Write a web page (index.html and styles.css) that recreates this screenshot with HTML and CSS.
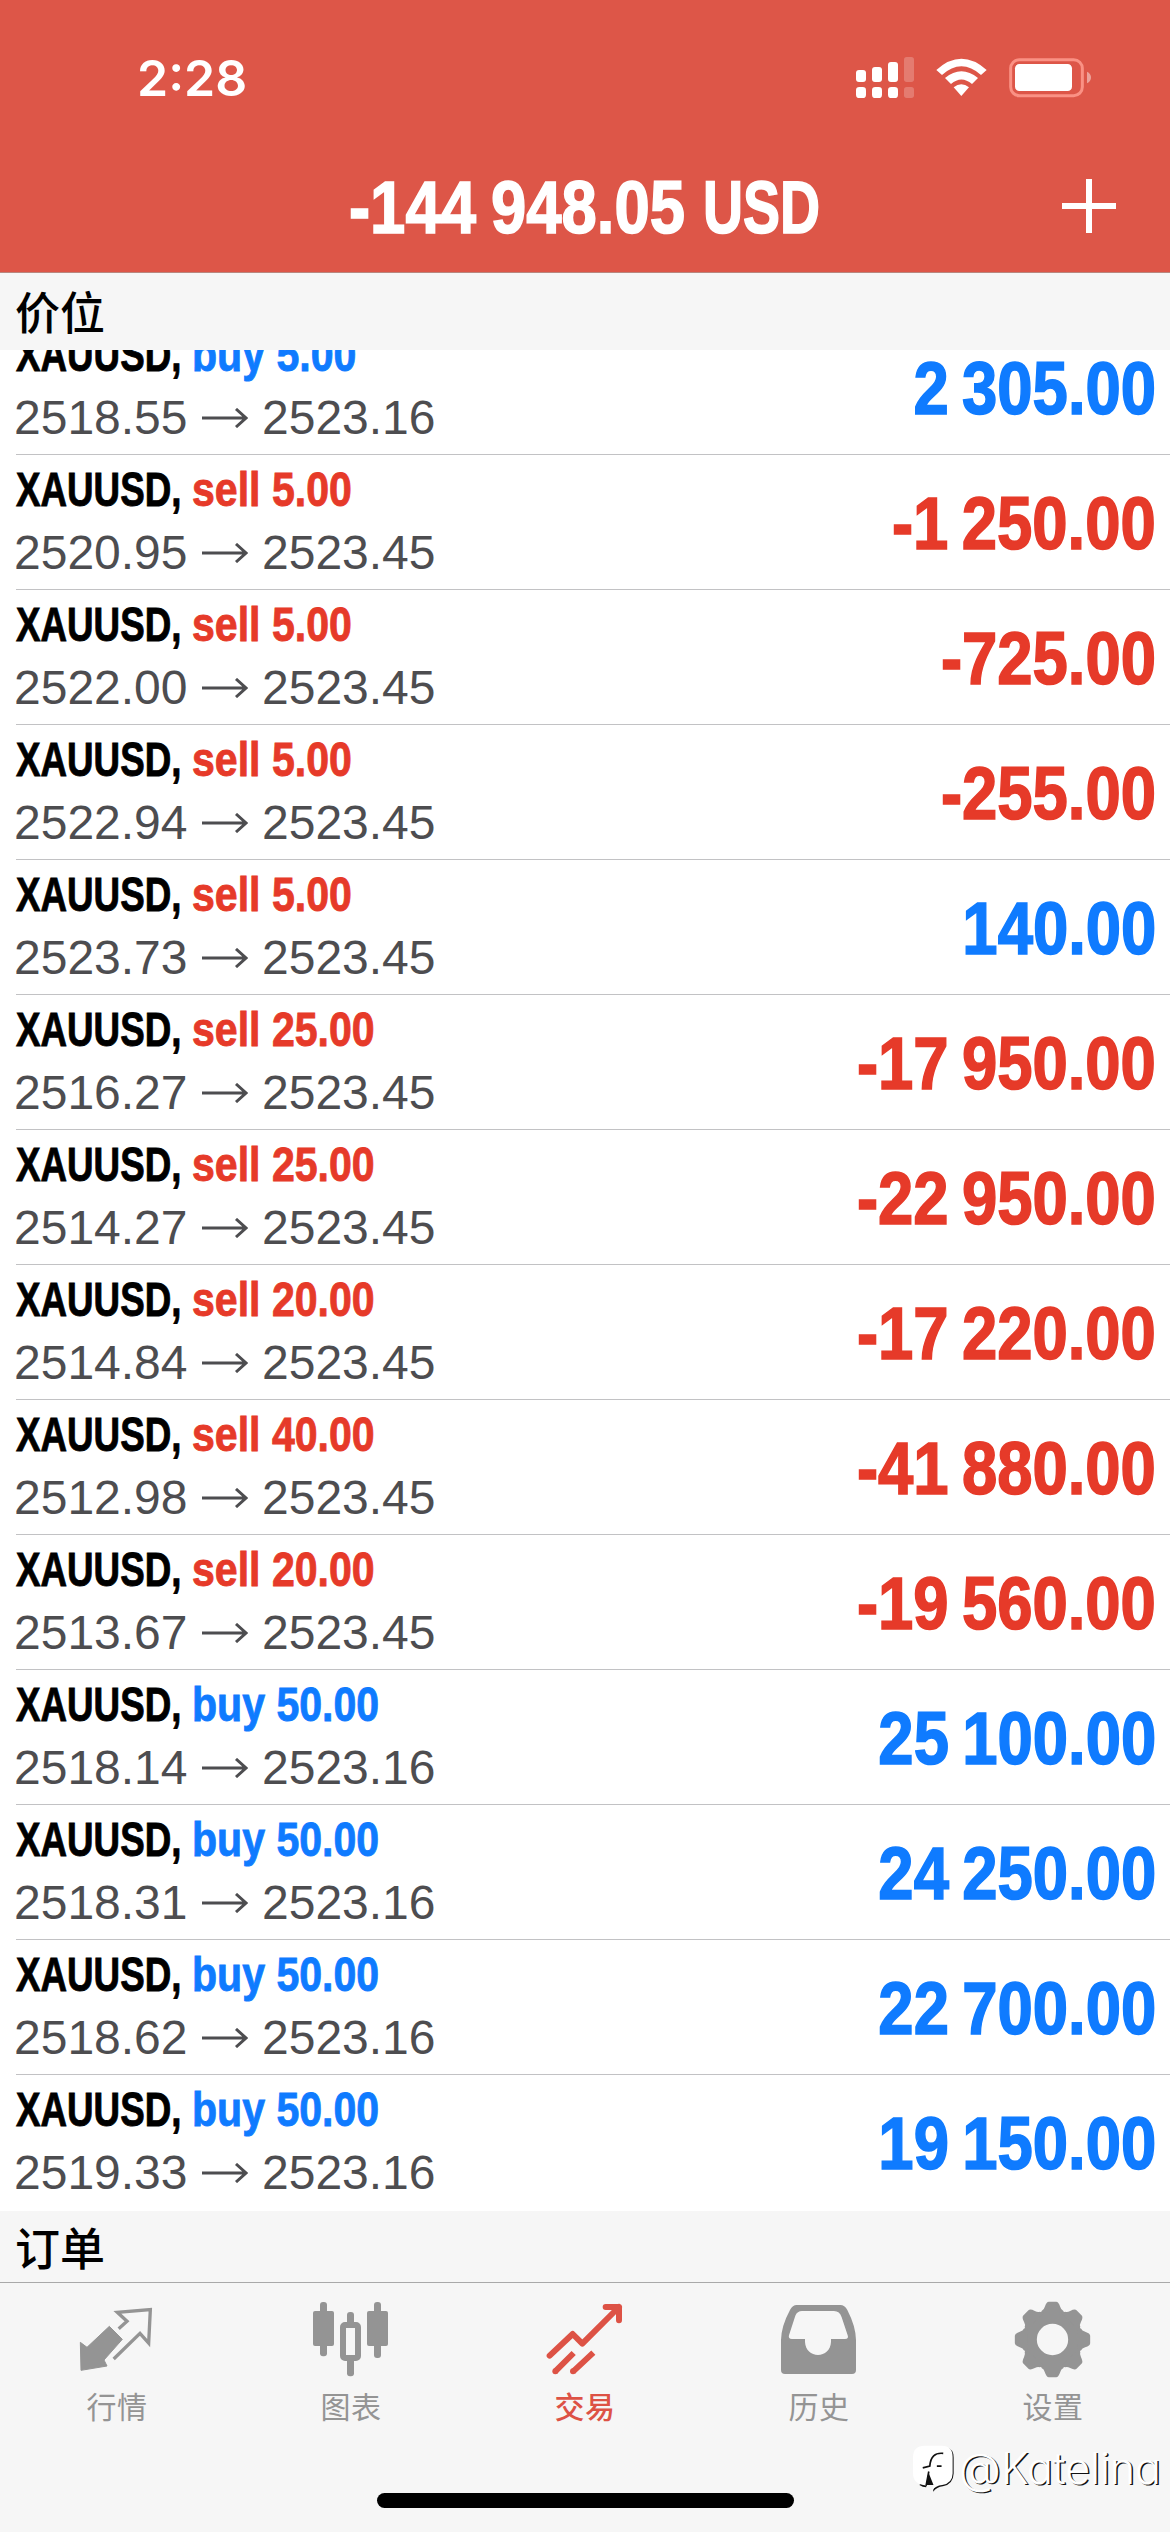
FILE: index.html
```html
<!DOCTYPE html>
<html lang="zh-CN">
<head>
<meta charset="utf-8">
<title>交易</title>
<link rel="stylesheet" href="styles.css">
</head>
<body>
<div class="screen">
  <header class="top">
    <div class="status">
      <span class="clock">2:28</span>
      <svg class="status-icons" viewBox="0 0 780 180" aria-hidden="true">
        <g fill="#fff">
          <rect x="48" y="60" width="30" height="36" rx="9"/>
          <rect x="96" y="51" width="30" height="45" rx="9"/>
          <rect x="144" y="36" width="30" height="60" rx="9"/>
          <rect x="48" y="111" width="30" height="33" rx="10"/>
          <rect x="96" y="111" width="30" height="33" rx="10"/>
          <rect x="144" y="111" width="30" height="33" rx="10"/>
          <rect x="192" y="21" width="30" height="75" rx="8" opacity=".22"/>
          <rect x="192" y="111" width="30" height="33" rx="8" opacity=".22"/>
          <path d="M289 60 Q364 -7 440 60 L423 75 Q364 23 306 75 Z"/>
          <path d="M315 84 Q364 44 414 84 L396 102 Q364 75 333 102 Z"/>
          <path d="M341 112 Q364 94 387 112 L364 138 Z"/>
          <rect x="525" y="42" width="171" height="81" rx="13"/>
          <path d="M741 65 Q753 71 753 82 Q753 94 741 100 Z" opacity=".45"/>
        </g>
        <rect x="512" y="29" width="215" height="108" rx="26" fill="none" stroke="#fa9184" stroke-width="9"/>
      </svg>
    </div>
    <div class="titlebar">
      <h1 class="balance"><span class="balance-num">-144 948.05</span><span class="balance-cur">USD</span></h1>
      <svg class="add" viewBox="0 0 54 54" aria-label="新订单"><path d="M0 27H54M27 0V54" stroke="#fff" stroke-width="6"/></svg>
    </div>
  </header>

  <h2 class="section section-first">价位</h2>
  <ul class="list">
    <li class="row"><div class="info"><div class="deal"><span class="sym">XAUUSD,</span><span class="side buy">buy 5.00</span></div><div class="prices"><span class="from">2518.55</span><svg class="arrow" viewBox="0 0 46 20"><path d="M0 10H44M34 1L44 10L34 19"/></svg><span>2523.16</span></div></div><span class="profit buy">2 305.00</span></li>
    <li class="row"><div class="info"><div class="deal"><span class="sym">XAUUSD,</span><span class="side sell">sell 5.00</span></div><div class="prices"><span class="from">2520.95</span><svg class="arrow" viewBox="0 0 46 20"><path d="M0 10H44M34 1L44 10L34 19"/></svg><span>2523.45</span></div></div><span class="profit sell">-1 250.00</span></li>
    <li class="row"><div class="info"><div class="deal"><span class="sym">XAUUSD,</span><span class="side sell">sell 5.00</span></div><div class="prices"><span class="from">2522.00</span><svg class="arrow" viewBox="0 0 46 20"><path d="M0 10H44M34 1L44 10L34 19"/></svg><span>2523.45</span></div></div><span class="profit sell">-725.00</span></li>
    <li class="row"><div class="info"><div class="deal"><span class="sym">XAUUSD,</span><span class="side sell">sell 5.00</span></div><div class="prices"><span class="from">2522.94</span><svg class="arrow" viewBox="0 0 46 20"><path d="M0 10H44M34 1L44 10L34 19"/></svg><span>2523.45</span></div></div><span class="profit sell">-255.00</span></li>
    <li class="row"><div class="info"><div class="deal"><span class="sym">XAUUSD,</span><span class="side sell">sell 5.00</span></div><div class="prices"><span class="from">2523.73</span><svg class="arrow" viewBox="0 0 46 20"><path d="M0 10H44M34 1L44 10L34 19"/></svg><span>2523.45</span></div></div><span class="profit buy">140.00</span></li>
    <li class="row"><div class="info"><div class="deal"><span class="sym">XAUUSD,</span><span class="side sell">sell 25.00</span></div><div class="prices"><span class="from">2516.27</span><svg class="arrow" viewBox="0 0 46 20"><path d="M0 10H44M34 1L44 10L34 19"/></svg><span>2523.45</span></div></div><span class="profit sell">-17 950.00</span></li>
    <li class="row"><div class="info"><div class="deal"><span class="sym">XAUUSD,</span><span class="side sell">sell 25.00</span></div><div class="prices"><span class="from">2514.27</span><svg class="arrow" viewBox="0 0 46 20"><path d="M0 10H44M34 1L44 10L34 19"/></svg><span>2523.45</span></div></div><span class="profit sell">-22 950.00</span></li>
    <li class="row"><div class="info"><div class="deal"><span class="sym">XAUUSD,</span><span class="side sell">sell 20.00</span></div><div class="prices"><span class="from">2514.84</span><svg class="arrow" viewBox="0 0 46 20"><path d="M0 10H44M34 1L44 10L34 19"/></svg><span>2523.45</span></div></div><span class="profit sell">-17 220.00</span></li>
    <li class="row"><div class="info"><div class="deal"><span class="sym">XAUUSD,</span><span class="side sell">sell 40.00</span></div><div class="prices"><span class="from">2512.98</span><svg class="arrow" viewBox="0 0 46 20"><path d="M0 10H44M34 1L44 10L34 19"/></svg><span>2523.45</span></div></div><span class="profit sell">-41 880.00</span></li>
    <li class="row"><div class="info"><div class="deal"><span class="sym">XAUUSD,</span><span class="side sell">sell 20.00</span></div><div class="prices"><span class="from">2513.67</span><svg class="arrow" viewBox="0 0 46 20"><path d="M0 10H44M34 1L44 10L34 19"/></svg><span>2523.45</span></div></div><span class="profit sell">-19 560.00</span></li>
    <li class="row"><div class="info"><div class="deal"><span class="sym">XAUUSD,</span><span class="side buy">buy 50.00</span></div><div class="prices"><span class="from">2518.14</span><svg class="arrow" viewBox="0 0 46 20"><path d="M0 10H44M34 1L44 10L34 19"/></svg><span>2523.16</span></div></div><span class="profit buy">25 100.00</span></li>
    <li class="row"><div class="info"><div class="deal"><span class="sym">XAUUSD,</span><span class="side buy">buy 50.00</span></div><div class="prices"><span class="from">2518.31</span><svg class="arrow" viewBox="0 0 46 20"><path d="M0 10H44M34 1L44 10L34 19"/></svg><span>2523.16</span></div></div><span class="profit buy">24 250.00</span></li>
    <li class="row"><div class="info"><div class="deal"><span class="sym">XAUUSD,</span><span class="side buy">buy 50.00</span></div><div class="prices"><span class="from">2518.62</span><svg class="arrow" viewBox="0 0 46 20"><path d="M0 10H44M34 1L44 10L34 19"/></svg><span>2523.16</span></div></div><span class="profit buy">22 700.00</span></li>
    <li class="row"><div class="info"><div class="deal"><span class="sym">XAUUSD,</span><span class="side buy">buy 50.00</span></div><div class="prices"><span class="from">2519.33</span><svg class="arrow" viewBox="0 0 46 20"><path d="M0 10H44M34 1L44 10L34 19"/></svg><span>2523.16</span></div></div><span class="profit buy">19 150.00</span></li>
  </ul>
  <h2 class="section section-orders">订单</h2>

  <nav class="tabs">
    <a class="tab">
      <svg class="tab-icon" viewBox="234 120 234 234" aria-hidden="true">
        <path d="M241 247L261 262L328 199L367 238L312 300L321 318L243 331Z" fill="currentColor" stroke="currentColor" stroke-width="3" stroke-linejoin="round"/>
        <path d="M356 206L381 184L352 157L451 149L446 249L420 220L341 297" fill="none" stroke="currentColor" stroke-width="10"/>
      </svg>
      <span>行情</span>
    </a>
    <a class="tab">
      <svg class="tab-icon" viewBox="936 120 234 234" aria-hidden="true">
        <g fill="currentColor">
          <rect x="960" y="126" width="21" height="163" rx="9"/><rect x="939" y="153" width="63" height="105" rx="6"/>
          <rect x="1122" y="126" width="21" height="168" rx="9"/><rect x="1101" y="153" width="63" height="105" rx="6"/>
          <rect x="1041" y="156" width="21" height="45" rx="9"/><rect x="1041" y="290" width="21" height="59" rx="9"/>
        </g>
        <rect x="1029" y="195" width="45" height="99" rx="6" fill="none" stroke="currentColor" stroke-width="18"/>
      </svg>
      <span>图表</span>
    </a>
    <a class="tab active">
      <svg class="tab-icon" viewBox="288 120 234 234" aria-hidden="true">
        <g fill="none" stroke="currentColor" stroke-width="18" stroke-linecap="round" stroke-linejoin="round">
          <path d="M299 287L368 222L397 251L507 141M467 141H507V181"/>
        </g>
        <g fill="none" stroke="currentColor" stroke-width="18">
          <path d="M315 335L371 279M369 335L430 278"/>
        </g>
        <g fill="currentColor"><circle cx="316" cy="334" r="9"/><circle cx="369" cy="334" r="9"/><path d="M480 141H507V168Z"/></g>
      </svg>
      <span>交易</span>
    </a>
    <a class="tab">
      <svg class="tab-icon" viewBox="990 120 234 234" aria-hidden="true">
        <path fill="currentColor" fill-rule="evenodd" d="M1040 135H1171Q1184 135 1192 150Q1217 198 1218 240V330Q1218 342 1206 342H1005Q993 342 993 330V240Q994 198 1020 150Q1028 135 1040 135ZM1056 153Q1042 153 1036 167L1017 226Q1014 237 1026 237H1065V246C1066 270 1084 285 1104 285C1124 285 1142 270 1143 246V237H1185Q1197 237 1193 226L1175 172Q1169 153 1152 153Z"/>
      </svg>
      <span>历史</span>
    </a>
    <a class="tab">
      <svg class="tab-icon" viewBox="432 120 234 234" aria-hidden="true">
        <defs><path id="tooth" d="M-38 -76L-32 -86Q-26 -88 -23 -98Q-18 -113 -11 -113H11Q18 -113 23 -98Q26 -88 32 -86L38 -76Z"/></defs>
        <g transform="translate(547.500 238.500)" fill="currentColor">
          <circle r="67" fill="none" stroke="currentColor" stroke-width="40"/>
          <use href="#tooth"/><use href="#tooth" transform="rotate(45)"/><use href="#tooth" transform="rotate(90)"/><use href="#tooth" transform="rotate(135)"/>
          <use href="#tooth" transform="rotate(180)"/><use href="#tooth" transform="rotate(225)"/><use href="#tooth" transform="rotate(270)"/><use href="#tooth" transform="rotate(315)"/>
        </g>
      </svg>
      <span>设置</span>
    </a>
  </nav>
  <div class="home-bar"></div>
  <div class="watermark">
    <svg class="mark" viewBox="38 50 128 146" aria-hidden="true">
      <path d="M101 192Q112 178 130 176Q161 170 162 138V90Q162 66 142 60L96 130L60 172Q70 179 80 179L82 172H112Q100 180 101 192Z" fill="#111"/>
      <path d="M76 55H126Q159 55 159 88V138Q158 168 128 172Q108 174 98 188L102 172L86 132L80 174Q41 170 41 138V90Q41 55 76 55Z" fill="#fff"/>
      <path d="M131 78Q94 74 91 116L70 121M112 116H126M88 132L80 174" fill="none" stroke="#111" stroke-width="5"/>
    </svg>
    <span class="handle"><span class="at">@</span><span>Katelina</span></span>
  </div>
</div>
</body>
</html>
```
FILE: styles.css
```css
* { box-sizing: border-box; }
body {
  margin: 0;
  background: #fff;
  color: #000;
  font-family: "Liberation Sans", Arial, "Noto Sans CJK SC", sans-serif;
}
.screen {
  position: relative;
  display: flex;
  flex-direction: column;
  width: 1170px;
  height: 2532px;
  overflow: hidden;
}

/* Header */
.top {
  height: 273px;
  background: #dd5648;
  border-bottom: 1px solid #b8877f;
  color: #fff;
}
.status {
  display: flex;
  justify-content: space-between;
  align-items: flex-start;
  height: 140px;
  padding: 50px 70px 0 137px;
}
.clock { font: 600 50px/57px Inter, sans-serif; }
.status-icons { width: 260px; height: 60px; }
.titlebar {
  display: flex;
  justify-content: space-between;
  height: 132px;
  padding: 0 54px 0 349px;
}
.balance {
  display: flex;
  margin: 0;
  font-size: 74px;
  line-height: 135px;
  white-space: nowrap;
  -webkit-text-stroke: 1.6px;
}
.balance-num { width: 354px; transform: scaleX(.857); transform-origin: 0 0; word-spacing: -3px; }
.balance-cur { transform: scaleX(.75); transform-origin: 0 0; }
.add { width: 54px; height: 54px; margin-top: 39px; }

/* Section headings */
.section {
  margin: 0;
  padding-left: 15px;
  background: #f6f6f6;
  font: 500 45px/75px "Noto Sans CJK SC", sans-serif;
}
.section-first { height: 77px; }
.section-orders { height: 71px; line-height: 71px; }

/* Positions */
.list {
  height: 1861px;
  margin: 0;
  padding: 0;
  list-style: none;
  overflow: hidden;
}
.row {
  display: flex;
  justify-content: space-between;
  height: 135px;
  margin-left: 16px;
  padding: 3px 14px 0 0;
  border-bottom: 1px solid #c2c2c4;
}
.row:first-child { margin-top: -30px; }
.row:last-child { border-bottom-color: transparent; }
.deal {
  display: flex;
  height: 63px;
  font-size: 49px;
  font-weight: 700;
  line-height: 63px;
  white-space: nowrap;
  -webkit-text-stroke: .9px;
}
.sym { width: 176px; transform: scaleX(.75); transform-origin: 0 0; }
.side { transform: scaleX(.838); transform-origin: 0 0; }
.prices {
  display: flex;
  align-items: center;
  color: #4d4d50;
  font-size: 48px;
  line-height: 63px;
}
.from { width: 186px; margin-left: -2px; }
.arrow { width: 46px; height: 20px; margin: 0 14px 0 2px; fill: none; stroke: #4d4d50; stroke-width: 3; }
.profit {
  font-size: 74px;
  font-weight: 700;
  line-height: 132px;
  white-space: nowrap;
  word-spacing: -5px;
  transform: scaleX(.857);
  transform-origin: 100% 0;
  -webkit-text-stroke: 1.6px;
}
.buy { color: #0f7bff; }
.sell { color: #e63a29; }

/* Tab bar */
.tabs {
  display: flex;
  height: 250px;
  padding-top: 17px;
  background: #f6f6f6;
  border-top: 1px solid #a9a9a9;
}
.tab {
  display: flex;
  flex: 1;
  flex-direction: column;
  align-items: center;
  color: #949494;
  font: 400 30px/40px "Noto Sans CJK SC", sans-serif;
  letter-spacing: .5px;
}
.tab-icon { width: 78px; height: 78px; margin-bottom: 7px; }
.active { color: #dd5245; font-weight: 500; }

/* Overlays */
.home-bar {
  position: absolute;
  left: 377px;
  bottom: 24px;
  width: 417px;
  height: 15px;
  border-radius: 8px;
  background: #000;
}
.watermark {
  position: absolute;
  left: 912px;
  bottom: 38px;
  display: flex;
  align-items: center;
}
.mark { width: 43px; height: 49px; }
.handle {
  display: flex;
  margin-left: 4px;
  color: #fff;
  font: 300 43px/52px Inter, sans-serif;
  font-feature-settings: "cv11";
  letter-spacing: -.1px;
  text-shadow: 1.500px 1px 0 #111;
}
.at { width: 42px; }
```
